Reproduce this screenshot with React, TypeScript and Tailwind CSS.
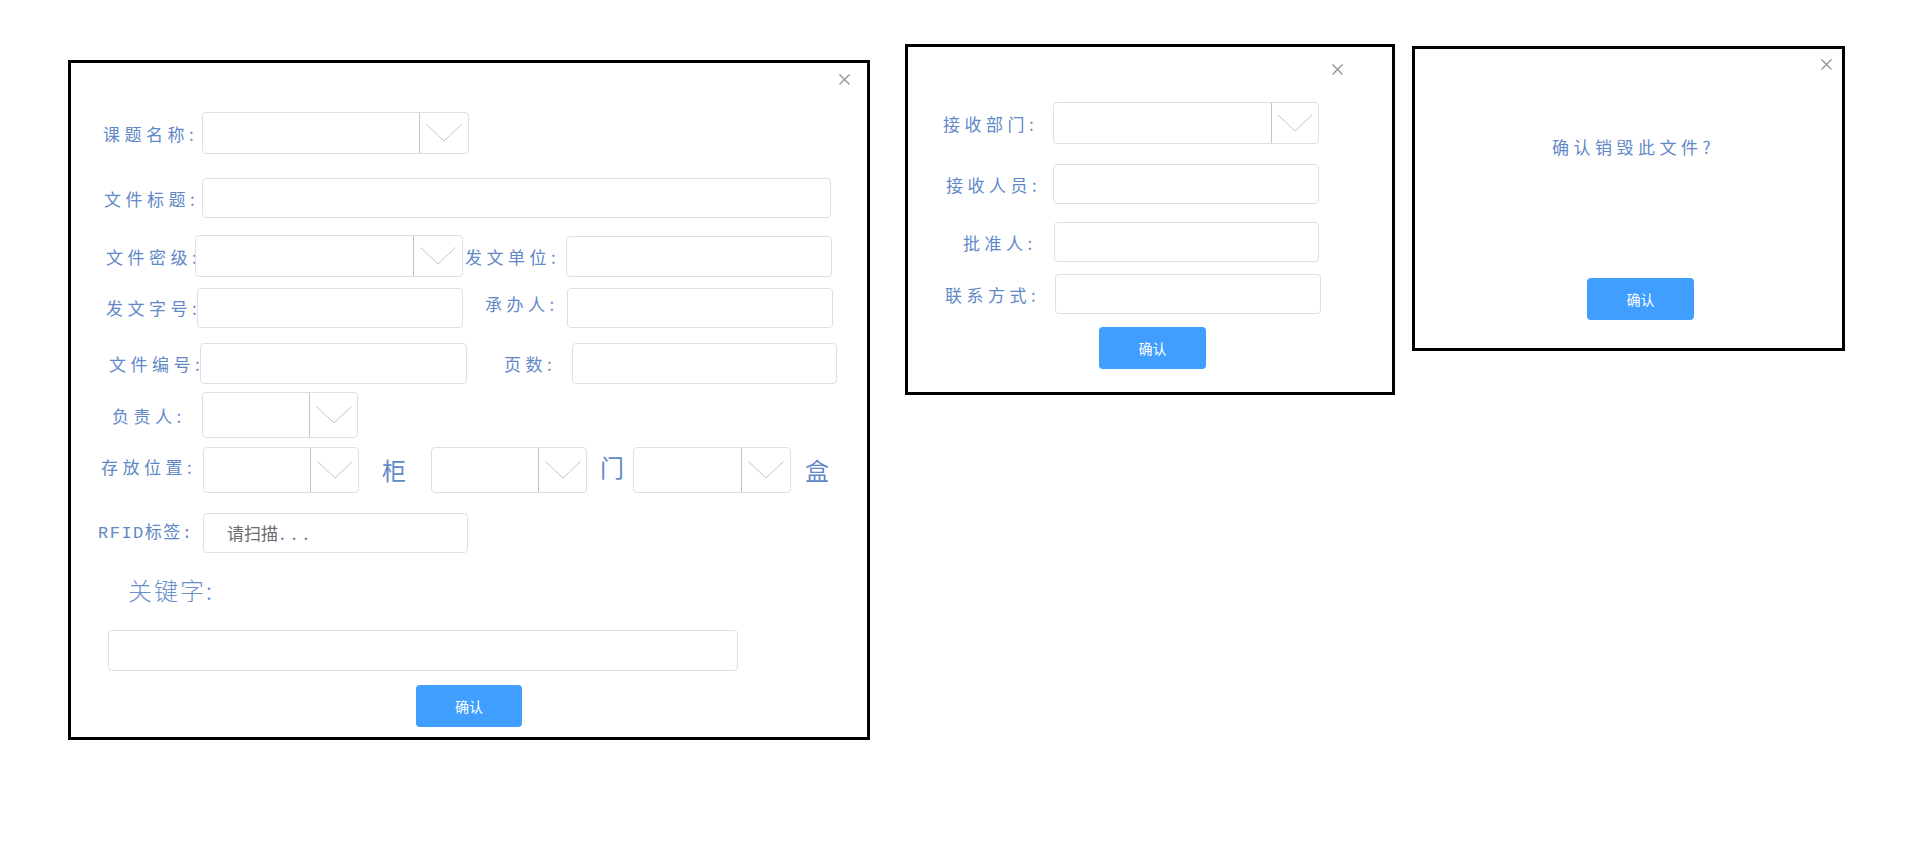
import React from 'react';

const labelCls =
  "shrink-0 whitespace-nowrap text-[17px] tracking-[4.5px] text-[#5f88c7] font-['Noto_Sans_CJK_SC',sans-serif] leading-none";

function Chevron() {
  return (
    <svg width="36" height="18" viewBox="0 0 36 18" fill="none">
      <path d="M0.5 0.5 L18 17 L35.5 0.5" stroke="#c4c4c4" strokeWidth="1" />
    </svg>
  );
}

function CloseIcon() {
  return (
    <svg width="11" height="11" viewBox="0 0 11 11" fill="none">
      <path d="M0.5 0.5 L10.5 10.5 M10.5 0.5 L0.5 10.5" stroke="#8f9399" strokeWidth="1.4" />
    </svg>
  );
}

function Select({ className, btn }: { className: string; btn: string }) {
  return (
    <div className={`flex shrink-0 rounded-[4px] border border-[#dcdfe6] bg-white ${className}`}>
      <div className="flex-1" />
      <div className={`flex items-center justify-center border-l border-[#c0c4cc] ${btn}`}>
        <Chevron />
      </div>
    </div>
  );
}

function Field({ className }: { className: string }) {
  return (
    <input
      type="text"
      className={`shrink-0 rounded-[4px] border border-[#dcdfe6] bg-white outline-none ${className}`}
    />
  );
}

function ConfirmButton({ className }: { className: string }) {
  return (
    <button
      className={`flex items-center justify-center rounded-[4px] bg-[#409eff] text-[14px] text-white font-['Noto_Sans_CJK_SC',sans-serif] ${className}`}
    >
      确认
    </button>
  );
}

export default function App() {
  return (
    <div className="min-h-[857px] w-full bg-white">
      <div className="flex items-start pl-[68px]">
        {/* 文件登记 */}
        <div className="relative mt-[60px] flex h-[680px] w-[802px] shrink-0 flex-col border-[3px] border-black bg-white">
          <div className="absolute right-[17px] top-[11px]">
            <CloseIcon />
          </div>

          <div className="mt-[49px] flex h-[42px] items-center">
            <span className={`${labelCls} ml-[32px] w-[99px]`}>课题名称:</span>
            <Select className="h-[42px] w-[267px]" btn="w-[49px]" />
          </div>

          <div className="mt-[24px] flex h-[40px] items-center">
            <span className={`${labelCls} ml-[33px] w-[98px]`}>文件标题:</span>
            <Field className="h-[40px] w-[629px]" />
          </div>

          <div className="mt-[17px] flex h-[42px] items-center">
            <span className={`${labelCls} ml-[35px] w-[89px]`}>文件密级:</span>
            <Select className="h-[42px] w-[268px]" btn="w-[49px]" />
            <span className={`${labelCls} ml-[2px] w-[101px]`}>发文单位:</span>
            <Field className="h-[41px] w-[266px]" />
          </div>

          <div className="mt-[10px] flex h-[41px] items-center">
            <span className={`${labelCls} ml-[35px] w-[91px]`}>发文字号:</span>
            <Field className="h-[40px] w-[266px]" />
            <span className={`${labelCls} ml-[22px] w-[82px] -translate-y-[4px]`}>承办人:</span>
            <Field className="h-[40px] w-[266px]" />
          </div>

          <div className="mt-[15px] flex h-[41px] items-center">
            <span className={`${labelCls} ml-[38px] w-[91px]`}>文件编号:</span>
            <Field className="h-[41px] w-[267px]" />
            <span className={`${labelCls} ml-[37px] w-[68px]`}>页数:</span>
            <Field className="h-[41px] w-[265px]" />
          </div>

          <div className="mt-[8px] flex h-[46px] items-center">
            <span className={`${labelCls} ml-[41px] w-[90px]`}>负责人:</span>
            <Select className="h-[46px] w-[156px]" btn="w-[48px]" />
          </div>

          <div className="mt-[8px] flex h-[47px] items-center">
            <span className={`${labelCls} ml-[30px] w-[102px] -translate-y-[3px]`}>存放位置:</span>
            <Select className="h-[46px] w-[156px]" btn="w-[48px]" />
            <span className="ml-[23px] w-[25px] shrink-0 text-[24px] leading-none text-[#5f88c7] font-['Noto_Sans_CJK_SC',sans-serif]">柜</span>
            <Select className="ml-[24px] h-[46px] w-[156px]" btn="w-[48px]" />
            <span className="ml-[13px] w-[24px] shrink-0 -translate-y-[3px] text-[24px] leading-none text-[#5f88c7] font-['Noto_Sans_CJK_SC',sans-serif]">门</span>
            <Select className="ml-[9px] h-[46px] w-[158px]" btn="w-[49px]" />
            <span className="ml-[14px] w-[25px] shrink-0 text-[24px] leading-none text-[#5f88c7] font-['Noto_Sans_CJK_SC',sans-serif]">盒</span>
          </div>

          <div className="mt-[20px] flex h-[40px] items-center">
            <span className="ml-[27px] w-[105px] shrink-0 whitespace-nowrap text-[17px] leading-none tracking-[1.5px] text-[#5f88c7] font-['Liberation_Mono','Noto_Sans_CJK_SC',monospace]">
              RFID标签:
            </span>
            <div className="flex h-[40px] w-[265px] shrink-0 items-center rounded-[4px] border border-[#dcdfe6] bg-white pl-[23px] text-[17px] text-[#6b6b6b] font-['Noto_Sans_CJK_SC',sans-serif]">
              请扫描<span className="ml-[2px] tracking-[7px]">...</span>
            </div>
          </div>

          <div className="mt-[21px] flex h-[32px] items-center">
            <span className="ml-[57px] text-[24px] leading-none tracking-[2px] text-[#6a90cb] font-['Noto_Sans_CJK_SC',sans-serif] font-light">
              关键字:
            </span>
          </div>

          <div className="mt-[24px] flex">
            <Field className="ml-[37px] h-[41px] w-[630px]" />
          </div>

          <div className="mt-[14px] flex justify-center">
            <ConfirmButton className="h-[42px] w-[106px]" />
          </div>
        </div>

        {/* 发放 */}
        <div className="relative ml-[35px] mt-[44px] flex h-[351px] w-[490px] shrink-0 flex-col border-[3px] border-black bg-white">
          <div className="absolute right-[49px] top-[17px]">
            <CloseIcon />
          </div>

          <div className="mt-[55px] flex h-[42px] items-center">
            <span className={`${labelCls} ml-[35px] w-[110px]`}>接收部门:</span>
            <Select className="h-[42px] w-[266px]" btn="w-[47px]" />
          </div>

          <div className="mt-[20px] flex h-[40px] items-center">
            <span className={`${labelCls} ml-[38px] w-[107px]`}>接收人员:</span>
            <Field className="h-[40px] w-[266px]" />
          </div>

          <div className="mt-[18px] flex h-[40px] items-center">
            <span className={`${labelCls} ml-[55px] w-[91px]`}>批准人:</span>
            <Field className="h-[40px] w-[265px]" />
          </div>

          <div className="mt-[12px] flex h-[40px] items-center">
            <span className={`${labelCls} ml-[37px] w-[110px]`}>联系方式:</span>
            <Field className="h-[40px] w-[266px]" />
          </div>

          <div className="mt-[13px] flex">
            <ConfirmButton className="ml-[191px] h-[42px] w-[107px]" />
          </div>
        </div>

        {/* 销毁确认 */}
        <div className="relative ml-[17px] mt-[46px] flex h-[305px] w-[433px] shrink-0 flex-col border-[3px] border-black bg-white">
          <div className="absolute right-[10px] top-[10px]">
            <CloseIcon />
          </div>

          <div className="mt-[85px] flex h-[24px] items-center">
            <span className={`${labelCls} ml-[137px]`}>确认销毁此文件?</span>
          </div>

          <div className="mt-[120px] flex">
            <ConfirmButton className="ml-[172px] h-[42px] w-[107px]" />
          </div>
        </div>
      </div>
    </div>
  );
}
